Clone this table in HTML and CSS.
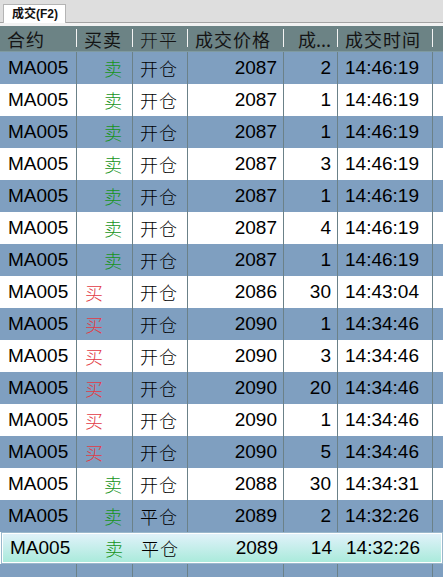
FILE: index.html
```html
<!DOCTYPE html>
<html>
<head>
<meta charset="utf-8">
<link rel="stylesheet" href="styles.css">
</head>
<body>
<div class="tabbar"><div class="tab">成交(F2)</div></div>
<div class="gap"></div>
<div class="grid">
  <div class="row head">
    <div class="c">合约</div><div class="c">买卖</div><div class="c">开平</div><div class="c">成交价格</div><div class="c hc5">成...</div><div class="c">成交时间</div><div class="c last"></div>
  </div>
  <div class="row b"><div class="c">MA005</div><div class="c s">卖</div><div class="c">开仓</div><div class="c r">2087</div><div class="c r">2</div><div class="c t">14:46:19</div><div class="c last"></div></div>
  <div class="row w"><div class="c">MA005</div><div class="c s">卖</div><div class="c">开仓</div><div class="c r">2087</div><div class="c r">1</div><div class="c t">14:46:19</div><div class="c last"></div></div>
  <div class="row b"><div class="c">MA005</div><div class="c s">卖</div><div class="c">开仓</div><div class="c r">2087</div><div class="c r">1</div><div class="c t">14:46:19</div><div class="c last"></div></div>
  <div class="row w"><div class="c">MA005</div><div class="c s">卖</div><div class="c">开仓</div><div class="c r">2087</div><div class="c r">3</div><div class="c t">14:46:19</div><div class="c last"></div></div>
  <div class="row b"><div class="c">MA005</div><div class="c s">卖</div><div class="c">开仓</div><div class="c r">2087</div><div class="c r">1</div><div class="c t">14:46:19</div><div class="c last"></div></div>
  <div class="row w"><div class="c">MA005</div><div class="c s">卖</div><div class="c">开仓</div><div class="c r">2087</div><div class="c r">4</div><div class="c t">14:46:19</div><div class="c last"></div></div>
  <div class="row b"><div class="c">MA005</div><div class="c s">卖</div><div class="c">开仓</div><div class="c r">2087</div><div class="c r">1</div><div class="c t">14:46:19</div><div class="c last"></div></div>
  <div class="row w"><div class="c">MA005</div><div class="c bu">买</div><div class="c">开仓</div><div class="c r">2086</div><div class="c r">30</div><div class="c t">14:43:04</div><div class="c last"></div></div>
  <div class="row b"><div class="c">MA005</div><div class="c bu">买</div><div class="c">开仓</div><div class="c r">2090</div><div class="c r">1</div><div class="c t">14:34:46</div><div class="c last"></div></div>
  <div class="row w"><div class="c">MA005</div><div class="c bu">买</div><div class="c">开仓</div><div class="c r">2090</div><div class="c r">3</div><div class="c t">14:34:46</div><div class="c last"></div></div>
  <div class="row b"><div class="c">MA005</div><div class="c bu">买</div><div class="c">开仓</div><div class="c r">2090</div><div class="c r">20</div><div class="c t">14:34:46</div><div class="c last"></div></div>
  <div class="row w"><div class="c">MA005</div><div class="c bu">买</div><div class="c">开仓</div><div class="c r">2090</div><div class="c r">1</div><div class="c t">14:34:46</div><div class="c last"></div></div>
  <div class="row b"><div class="c">MA005</div><div class="c bu">买</div><div class="c">开仓</div><div class="c r">2090</div><div class="c r">5</div><div class="c t">14:34:46</div><div class="c last"></div></div>
  <div class="row w"><div class="c">MA005</div><div class="c s">卖</div><div class="c">开仓</div><div class="c r">2088</div><div class="c r">30</div><div class="c t">14:34:31</div><div class="c last"></div></div>
  <div class="row b"><div class="c">MA005</div><div class="c s">卖</div><div class="c">平仓</div><div class="c r">2089</div><div class="c r">2</div><div class="c t">14:32:26</div><div class="c last"></div></div>
  <div class="row sel"><div class="c">MA005</div><div class="c s">卖</div><div class="c">平仓</div><div class="c r">2089</div><div class="c r">14</div><div class="c t">14:32:26</div><div class="c last"></div></div>
  <div class="row b"><div class="c"></div><div class="c"></div><div class="c"></div><div class="c"></div><div class="c"></div><div class="c"></div><div class="c last"></div></div>
</div>
</body>
</html>
```

FILE: styles.css
```css
html, body {
  margin: 0;
  padding: 0;
  background: #ffffff;
  overflow: hidden;
}
body {
  width: 443px;
  height: 577px;
  font-family: "Liberation Sans", Arial, "Noto Sans CJK SC", sans-serif;
  color: #000;
}
.tabbar {
  height: 22px;
  background: #dedede;
  border-bottom: 1px solid #a3a3a3;
  display: flex;
  align-items: flex-end;
  padding-left: 3px;
}
.tab {
  height: 19px;
  margin-bottom: -1px;
  width: 63px;
  box-sizing: border-box;
  background: #fff;
  border: 1px solid #b4b4b4;
  border-bottom: none;
  font-size: 12px;
  font-weight: bold;
  line-height: 19px;
  padding-left: 8px;
  color: #111;
}
.gap {
  height: 3px;
  background: #f2f2f2;
}
.grid {
  display: flex;
  flex-direction: column;
}
.row {
  display: grid;
  grid-template-columns: 77px 56px 55px 96px 54px 95px 10px;
  height: 32px;
  font-size: 19px;
}
.c {
  box-sizing: border-box;
  border-right: 1px solid #6b8188;
  display: flex;
  align-items: center;
  padding-left: 8px;
  white-space: nowrap;
  overflow: hidden;
}
.c.last { border-right: none; }
.head {
  height: 26px;
  background: #6c8385;
  color: #141414;
  font-family: "Noto Sans CJK SC", sans-serif;
  font-weight: 400;
  font-size: 18px;
  letter-spacing: 1px;
  border-bottom: 1px solid #7f9aa0;
  box-sizing: border-box;
}
.head .c {
  border-right: none;
  position: relative;
  padding-left: 7px;
}
.head .c::after {
  content: "";
  position: absolute;
  right: 0;
  top: 3px;
  bottom: 4px;
  width: 1px;
  background: #f4f4f4;
}
.head .c.last::after { display: none; }
.head .hc5 { padding-left: 14px; letter-spacing: 0; }
.b { background: #7f9fc0; }
.w { background: #ffffff; }
.s, .bu, .row .c:nth-child(3) {
  font-family: "Noto Sans CJK SC", sans-serif;
  font-weight: 300;
  font-size: 18px;
}
.row .c:nth-child(3) { letter-spacing: 1px; padding-left: 7px; }
.s {
  justify-content: flex-end;
  padding-right: 10px;
  color: #16941a;
}
.bu {
  color: #e23a44;
  padding-left: 8px;
}
.r {
  justify-content: flex-end;
  padding-right: 6px;
}
.t { padding-left: 7px; }
.sel {
  margin-left: 1px;
  background: linear-gradient(#e2f2fb, #a8eada);
  border: 1px solid #9ab8cc;
  box-shadow: inset 0 0 0 1px #ffffff;
  box-sizing: border-box;
  grid-template-columns: 76px 56px 55px 96px 54px 95px 9px;
}
.sel .c { border-right-color: transparent; }
```
